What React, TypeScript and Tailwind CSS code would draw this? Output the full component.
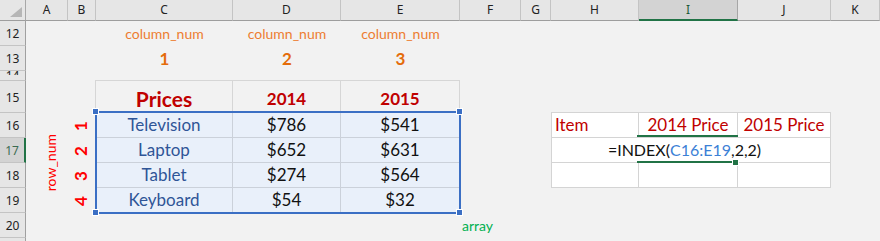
import React from "react";

type Head = { label: string; active?: boolean };

const colHeads: Head[] = [
  { label: "A" },
  { label: "B" },
  { label: "C" },
  { label: "D" },
  { label: "E" },
  { label: "F" },
  { label: "G" },
  { label: "H" },
  { label: "I", active: true },
  { label: "J" },
  { label: "K" },
];

const rowHeads: Head[] = [
  { label: "12" },
  { label: "13" },
  { label: "14" },
  { label: "15" },
  { label: "16" },
  { label: "17", active: true },
  { label: "18" },
  { label: "19" },
  { label: "20" },
  { label: "" },
];

const products = [
  { name: "Television", y2014: "$786", y2015: "$541" },
  { name: "Laptop", y2014: "$652", y2015: "$631" },
  { name: "Tablet", y2014: "$274", y2015: "$564" },
  { name: "Keyboard", y2014: "$54", y2015: "$32" },
];

function ColumnHeaders() {
  return (
    <div className="col-start-1 col-span-12 row-start-1 grid grid-cols-subgrid font-['Noto_Sans',sans-serif] text-[12px]">
      <div className="flex items-end justify-end pr-[3px] pb-[3px] bg-[#e6e6e6] border-r border-r-[#a8a8a8] border-b border-b-[#9e9e9e]">
        <svg width="12" height="10" viewBox="0 0 12 10">
          <polygon points="12,0 12,10 0,10" fill="#b6b6b6" />
        </svg>
      </div>
      {colHeads.map((h) =>
        h.active ? (
          <div
            key={h.label}
            className="flex items-center justify-center bg-[#d3d3d3] border-r border-r-[#a6a6a6] border-b-2 border-b-[#217346] text-[#1d5a38]"
          >
            {h.label}
          </div>
        ) : (
          <div
            key={h.label}
            className="flex items-center justify-center bg-[#e6e6e6] border-r border-r-[#c4c4c4] border-b border-b-[#9e9e9e] text-[#222222]"
          >
            {h.label}
          </div>
        )
      )}
    </div>
  );
}

function RowHeaders() {
  return (
    <div className="col-start-1 row-start-2 row-span-10 grid grid-rows-subgrid font-['Noto_Sans',sans-serif] text-[12px]">
      {rowHeads.map((h, i) => {
        if (h.active) {
          return (
            <div
              key={i}
              className="flex items-center justify-center pt-[2px] bg-[#d3d3d3] border-b border-b-[#c4c4c4] border-r-2 border-r-[#217346] text-[#3b6b52]"
            >
              {h.label}
            </div>
          );
        }
        if (h.label === "14") {
          return (
            <div
              key={i}
              className="flex items-start justify-center overflow-hidden bg-[#e6e6e6] border-b border-b-[#c4c4c4] border-r border-r-[#a0a0a0] text-[#222222]"
            >
              <div className="h-[5px] overflow-hidden leading-[11px] -mt-[1px]">{h.label}</div>
            </div>
          );
        }
        return (
          <div
            key={i}
            className="flex items-center justify-center pt-[2px] overflow-hidden bg-[#e6e6e6] border-b border-b-[#c4c4c4] border-r border-r-[#a0a0a0] text-[#222222]"
          >
            {h.label}
          </div>
        );
      })}
    </div>
  );
}

function PriceTable() {
  return (
    <div className="relative col-start-4 col-span-3 row-start-5 row-span-5 -mt-px -ml-px border-t border-l border-[#d6d6d6] grid grid-cols-[137px_108px_119px] grid-rows-[32px_25px_25px_25px_25px]">
      <div className="flex items-end justify-center pb-[1px] border-r border-b border-[#d6d6d6] text-[21px] leading-[25px] font-bold text-[#c00000]">
        Prices
      </div>
      <div className="flex items-end justify-center pb-[3px] border-r border-b border-[#d6d6d6] text-[17px] leading-[20px] font-bold text-[#c00000]">
        2014
      </div>
      <div className="flex items-end justify-center pb-[3px] border-r border-b border-[#d6d6d6] text-[17px] leading-[20px] font-bold text-[#c00000]">
        2015
      </div>
      {products.map((p) => (
        <React.Fragment key={p.name}>
          <div className="flex items-center justify-center bg-[#e9f0fa] border-r border-b border-[#cbd1da] text-[17px] text-[#2f5597]">
            {p.name}
          </div>
          <div className="flex items-center justify-center bg-[#e9f0fa] border-r border-b border-[#cbd1da] text-[17px] text-[#111111]">
            {p.y2014}
          </div>
          <div className="flex items-center justify-center bg-[#e9f0fa] border-r border-b border-[#cbd1da] text-[17px] text-[#111111]">
            {p.y2015}
          </div>
        </React.Fragment>
      ))}

      {/* highlighted reference range C16:E19 */}
      <div className="absolute left-[-1px] top-[30px] w-[366px] h-[103px] border-2 border-[#3b6fc4]" />
      <div className="absolute left-[-4px] top-[27px] w-[7px] h-[7px] bg-[#3b6fc4] border border-white" />
      <div className="absolute left-[360px] top-[27px] w-[7px] h-[7px] bg-[#3b6fc4] border border-white" />
      <div className="absolute left-[-4px] top-[128px] w-[7px] h-[7px] bg-[#3b6fc4] border border-white" />
      <div className="absolute left-[360px] top-[128px] w-[7px] h-[7px] bg-[#3b6fc4] border border-white" />
    </div>
  );
}

function LookupTable() {
  return (
    <div className="relative col-start-9 col-span-3 row-start-6 row-span-3 -mt-px border-t border-l border-[#d4d4d4] bg-white grid grid-cols-[87px_99px_93px] grid-rows-[25px_25px_25px] text-[17px]">
      <div className="flex items-center justify-start pl-[3px] border-r border-b border-[#d4d4d4] text-[#c00000]">
        Item
      </div>
      <div className="flex items-center justify-center border-r border-b border-[#d4d4d4] text-[#c00000]">
        2014 Price
      </div>
      <div className="flex items-center justify-center border-r border-b border-[#d4d4d4] text-[#c00000]">
        2015 Price
      </div>
      <div className="col-span-3 flex items-center justify-center pr-[13px] border-r border-b border-[#d4d4d4] text-[16px] text-[#111111] whitespace-nowrap">
        <span>=INDEX(</span>
        <span className="text-[#3b80d6]">C16:E19</span>
        <span>,2,2)</span>
      </div>
      <div className="border-r border-b border-[#d4d4d4]" />
      <div className="border-r border-b border-[#d4d4d4]" />
      <div className="border-r border-b border-[#d4d4d4]" />

      {/* active cell I17 */}
      <div className="absolute left-[85px] top-[22px] w-[101px] h-[2px] bg-[#217346]" />
      <div className="absolute left-[85px] top-[48px] w-[96px] h-[2px] bg-[#217346]" />
      <div className="absolute left-[180px] top-[46px] w-[7px] h-[7px] bg-[#217346] border border-white" />
    </div>
  );
}

export default function App() {
  return (
    <div className="w-[880px] h-[241px] overflow-hidden bg-[#f2f2f2]">
      <div className="grid h-[241px] grid-cols-[26px_42px_28px_137px_108px_119px_61px_30px_88px_99px_93px_1fr] grid-rows-[21px_25px_25px_10px_32px_25px_25px_25px_25px_25px_4px] font-['Lato','Liberation_Sans',sans-serif]">
        <ColumnHeaders />
        <RowHeaders />

        {/* column_num labels */}
        <div className="col-start-4 row-start-2 flex items-center justify-center text-[14px] text-[#ed7d31]">column_num</div>
        <div className="col-start-5 row-start-2 flex items-center justify-center text-[14px] text-[#ed7d31]">column_num</div>
        <div className="col-start-6 row-start-2 flex items-center justify-center text-[14px] text-[#ed7d31]">column_num</div>
        <div className="col-start-4 row-start-3 flex items-center justify-center text-[17px] font-bold text-[#e46c0a]">1</div>
        <div className="col-start-5 row-start-3 flex items-center justify-center text-[17px] font-bold text-[#e46c0a]">2</div>
        <div className="col-start-6 row-start-3 flex items-center justify-center text-[17px] font-bold text-[#e46c0a]">3</div>

        {/* row_num labels */}
        <div className="col-start-2 row-start-6 row-span-4 flex items-center justify-center pl-[6px]">
          <span className="[writing-mode:vertical-rl] rotate-180 text-[14px] text-[#ff0000] whitespace-nowrap">row_num</span>
        </div>
        <div className="col-start-3 row-start-6 flex items-center justify-center pr-[2px]">
          <span className="[writing-mode:vertical-rl] rotate-180 text-[17px] font-bold text-[#ff0000]">1</span>
        </div>
        <div className="col-start-3 row-start-7 flex items-center justify-center pr-[2px]">
          <span className="[writing-mode:vertical-rl] rotate-180 text-[17px] font-bold text-[#ff0000]">2</span>
        </div>
        <div className="col-start-3 row-start-8 flex items-center justify-center pr-[2px]">
          <span className="[writing-mode:vertical-rl] rotate-180 text-[17px] font-bold text-[#ff0000]">3</span>
        </div>
        <div className="col-start-3 row-start-9 flex items-center justify-center pr-[2px]">
          <span className="[writing-mode:vertical-rl] rotate-180 text-[17px] font-bold text-[#ff0000]">4</span>
        </div>

        <PriceTable />
        <LookupTable />

        {/* array label */}
        <div className="col-start-7 row-start-10 flex items-center justify-start pl-[2px] text-[14px] text-[#00b050]">array</div>
      </div>
    </div>
  );
}
